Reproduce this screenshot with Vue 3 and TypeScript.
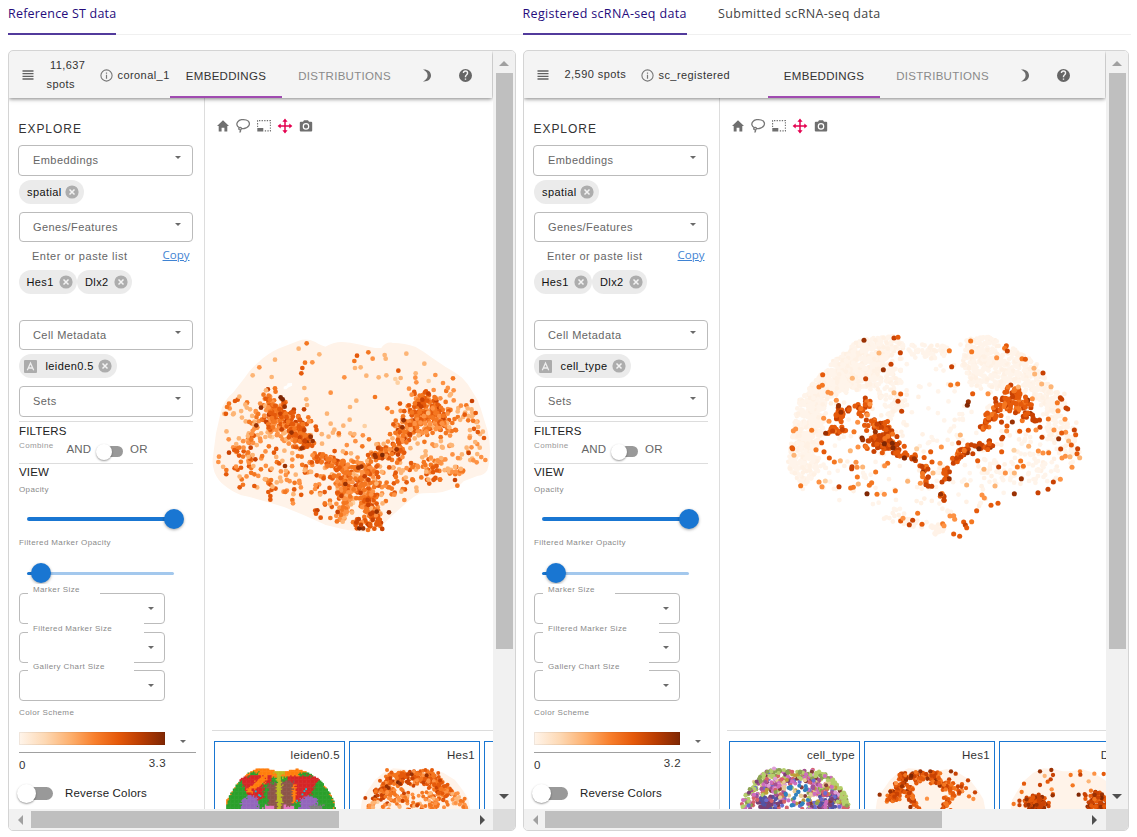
<script setup lang="ts">
interface Dot { x: number; y: number; c: string }
interface Card { title: string; kind: 'cells' | 'dots'; dots: Dot[]; r: number; outline: boolean }
interface Panel {
  id: string
  spots: string
  name: string
  meta: string
  max: string
  plot: Dot[]
  base: Dot[]
  cards: Card[]
}
type Pt = [number, number]

const ORANGES = ['#fff3e8', '#fdd0a2', '#fdb576', '#fd9244', '#f47721', '#e55a0b', '#c94203', '#9a3103', '#7f2704']

function rng(seed: number): () => number {
  let s = seed
  return () => {
    s = (s * 1664525 + 1013904223) % 4294967296
    return s / 4294967296
  }
}
const poly = (s: string): Pt[] => s.split(' ').map((p) => p.split(',').map(Number) as Pt)
const explicit = (s: string): Dot[] =>
  s.trim().split(/\s+/).map((p) => {
    const [x, y, c] = p.split(',').map(Number)
    return { x, y, c: ORANGES[c] }
  })

function inside(x: number, y: number, pts: Pt[]): boolean {
  let hit = false
  for (let i = 0, j = pts.length - 1; i < pts.length; j = i++) {
    const [xi, yi] = pts[i]
    const [xj, yj] = pts[j]
    if (yi > y !== yj > y && x < ((xj - xi) * (y - yi)) / (yj - yi) + xi) hit = !hit
  }
  return hit
}
const shade = (t: number): string => ORANGES[Math.max(1, Math.min(8, Math.round(t)))]

/* Dots scattered around a line segment. */
function band(r: () => number, a: Pt, b: Pt, w: number, n: number, mean: number, spread = 2.1): Dot[] {
  const out: Dot[] = []
  for (let i = 0; i < n; i++) {
    const t = r()
    const g = () => (r() + r() + r() - 1.5) * 1.35 * w
    out.push({ x: a[0] + (b[0] - a[0]) * t + g(), y: a[1] + (b[1] - a[1]) * t + g(), c: shade(mean + (r() + r() - 1) * spread) })
  }
  return out
}
/* Dots spread evenly over a polygon. */
function fill(r: () => number, area: Pt[], n: number, pick: () => string): Dot[] {
  const xs = area.map((p) => p[0])
  const ys = area.map((p) => p[1])
  const x0 = Math.min(...xs), x1 = Math.max(...xs), y0 = Math.min(...ys), y1 = Math.max(...ys)
  const out: Dot[] = []
  let guard = 0
  while (out.length < n && guard++ < n * 20) {
    const x = x0 + r() * (x1 - x0)
    const y = y0 + r() * (y1 - y0)
    if (inside(x, y, area)) out.push({ x, y, c: pick() })
  }
  return out
}

const OUTLINE_A = 'M282,34 Q305,26 330,38 Q348,50 362,52 Q385,38 410,38 Q430,38 470,47 Q505,58 530,56 Q540,38 562,40 Q600,42 630,52 Q655,66 680,85 L720,112 Q755,132 770,145 Q790,165 800,185 Q818,210 825,235 L845,300 Q853,330 853,360 Q852,400 845,420 Q835,434 820,435 L775,452 Q760,470 740,475 Q715,485 690,487 Q655,486 640,490 Q620,500 600,520 L560,555 L530,585 Q518,600 505,602 L470,603 Q430,600 400,592 L360,582 L300,555 L240,530 L190,515 Q150,502 110,494 Q80,482 60,465 Q40,450 30,425 Q22,400 26,380 L35,310 L52,235 Q66,205 85,190 L120,145 Q140,115 165,95 Q190,72 220,58 Z'

function plotA(): Dot[] {
  const r = rng(41)
  const light = () => shade(1.7 + r() * r() * 4)
  const mid = () => shade(1.6 + r() * 3.8)
  return [
    ...fill(r, poly('90,330 160,310 250,360 330,400 420,440 420,570 380,575 330,550 310,510 215,490 110,465 95,440'), 135, mid),
    ...fill(r, poly('500,420 620,370 720,390 780,425 740,450 640,470 560,500 530,570 490,590'), 105, mid),
    ...fill(r, poly('600,350 700,320 830,330 835,395 760,440 680,420 610,400'), 45, light),
    ...fill(r, poly('720,170 780,190 815,260 840,320 770,330 740,260'), 32, light),
    ...fill(r, poly('55,205 100,200 160,240 140,330 70,370 50,300'), 24, light),
    ...fill(r, poly('40,370 110,330 130,400 110,470 60,430'), 10, mid),
    ...fill(r, poly('320,300 500,315 560,330 560,370 400,375 330,350'), 28, light),
    ...band(r, [205, 295], [255, 330], 22, 40, 2.5),
    ...band(r, [180, 230], [230, 255], 31, 90, 3.9),
    ...band(r, [215, 260], [310, 310], 27, 130, 4.4),
    ...band(r, [285, 320], [300, 345], 18, 30, 5),
    ...band(r, [160, 270], [130, 340], 12, 20, 3.4),
    ...band(r, [320, 375], [415, 410], 13, 48, 4.2),
    ...band(r, [415, 408], [500, 415], 18, 55, 3.5),
    ...band(r, [500, 395], [590, 350], 18, 58, 4.5),
    ...band(r, [585, 325], [640, 230], 27, 110, 4.1),
    ...band(r, [650, 215], [700, 245], 30, 95, 4.3),
    ...band(r, [640, 290], [740, 285], 28, 90, 3.7),
    ...band(r, [415, 420], [420, 490], 20, 72, 3.7),
    ...band(r, [435, 490], [410, 565], 18, 50, 3.1),
    ...band(r, [480, 430], [480, 500], 25, 78, 3.7),
    ...band(r, [485, 495], [500, 565], 15, 60, 4.3),
    ...band(r, [455, 575], [530, 580], 14, 30, 4.7),
    ...explicit(`305,40,4 281,56,2 343,73,2 210,89,2 163,112,3 143,136,2 200,141,2 300,98,4 322,97,3 292,114,5 289,130,5
      456,77,5 448,93,4 490,67,4 503,86,3 539,75,2 542,86,2 604,71,2 658,101,2 450,114,2 467,112,2 484,137,2 418,142,3
      521,142,2 544,136,2 580,122,5 571,147,1 578,158,1 587,144,2 632,130,2 631,143,3 634,157,3 691,135,3 744,145,4 714,159,3
      671,153,1 612,176,3 620,194,3 660,187,5 670,191,6 686,180,3 706,205,3 298,174,2 377,188,3 304,208,2 306,225,2 183,181,2
      210,175,4 227,202,8 233,208,8 239,230,7 168,233,7 510,201,4 454,212,2 435,231,2 547,235,4 561,246,3 366,251,2 434,269,2
      479,288,1 415,287,2 377,281,2 388,299,2 90,213,5 98,209,5 72,221,4 66,231,4 103,200,2 121,224,2 135,238,2 154,286,7
      137,353,6 72,368,6 42,380,3 40,396,3 64,420,4 151,388,6 240,408,7 104,472,5 148,468,5 190,486,5 196,498,5 196,509,5
      262,510,4 264,520,3 317,320,7 323,333,7 299,332,6 290,355,7 337,541,6 333,551,5 347,563,5 376,564,4 398,546,6 421,462,7
      409,498,6 463,595,8 489,600,4 508,596,5 515,545,7 552,547,7 509,375,7 512,381,7 532,375,8 575,358,7 596,271,7 592,292,7
      615,313,6 652,209,6 801,213,6 812,249,5 779,254,5 837,324,5 841,390,3 791,369,6 750,450,6 757,467,4 460,413,7 469,410,7
      479,439,6 488,510,6 490,525,6 496,552,6 454,577,6 468,585,6 598,510,3 568,494,3 635,483,2 634,473,2 805,391,3 815,397,3`),
  ]
}

const OUT_B = poly('235,45 330,28 400,45 470,60 560,40 620,32 690,55 760,105 820,165 870,225 895,310 900,380 870,430 835,465 800,480 720,490 650,520 590,560 550,600 490,620 430,600 330,580 240,545 130,510 60,490 22,430 30,330 60,220 120,150 170,90')
function baseB(): Dot[] {
  const r = rng(77)
  const pale = () => (r() < 0.25 ? '#fff1e4' : '#fff4ea')
  return [
    ...fill(r, OUT_B, 330, pale),
    ...fill(r, poly('235,45 340,30 380,60 300,130 230,180 130,230 140,300 110,370 125,430 70,485 25,430 35,320 60,220 130,140'), 820, pale),
    ...fill(r, poly('170,100 300,90 290,190 150,210 110,300 80,290 90,210'), 260, pale),
    ...fill(r, poly('560,45 620,32 700,70 770,115 810,180 860,240 820,290 760,210 700,170 650,190 570,180 545,120'), 470, pale),
    ...fill(r, poly('270,130 360,100 370,240 330,290 300,220'), 100, pale),
    ...fill(r, poly('370,60 520,60 500,105 400,100'), 40, pale),
    ...fill(r, poly('570,400 770,380 860,430 770,475 620,480'), 65, pale),
    ...fill(r, poly('790,210 890,310 895,380 850,400 800,340'), 60, pale),
    ...band(r, [470, 608], [480, 615], 12, 18, 1).map((d) => ({ ...d, c: '#fff2e7' })),
    ...band(r, [320, 570], [420, 600], 12, 24, 1).map((d) => ({ ...d, c: '#fff2e7' })),
  ]
}
function plotB(): Dot[] {
  const r = rng(9)
  return [
    ...band(r, [172, 275], [215, 250], 14, 24, 5.4, 1.6),
    ...band(r, [235, 243], [272, 240], 15, 20, 5.2, 1.6),
    ...band(r, [135, 325], [200, 308], 9, 17, 5.1, 1.6),
    ...band(r, [262, 292], [312, 296], 16, 26, 5.3, 1.6),
    ...band(r, [262, 352], [355, 368], 17, 54, 5.5, 1.8),
    ...band(r, [305, 315], [335, 350], 18, 32, 5.3, 1.7),
    ...band(r, [350, 392], [425, 408], 14, 16, 5.3, 1.6),
    ...band(r, [433, 420], [443, 485], 8, 20, 5.5, 1.5),
    ...band(r, [500, 435], [500, 450], 10, 11, 5.2, 1.5),
    ...band(r, [515, 413], [550, 378], 10, 18, 5.3, 1.5),
    ...band(r, [555, 380], [635, 355], 11, 30, 5.5, 1.8),
    ...band(r, [606, 315], [642, 268], 13, 28, 5.1, 1.6),
    ...band(r, [645, 262], [700, 225], 19, 36, 5.2, 1.6),
    ...band(r, [705, 212], [740, 260], 20, 38, 5.3, 1.8),
    ...band(r, [740, 265], [775, 295], 9, 12, 5.7, 1.6),
    ...band(r, [688, 190], [710, 208], 11, 10, 4.9, 1.6),
    ...band(r, [483, 510], [496, 530], 5, 8, 5.5, 1.6),
    ...explicit(`252,46,7 342,39,6 354,37,5 297,84,2 361,83,6 333,118,6 310,134,7 257,161,6 217,160,2 128,149,5 117,186,4 127,181,4
      144,202,3 153,205,3 169,226,3 342,203,2 362,207,5 354,229,6 365,259,6 508,77,4 572,48,4 575,80,4 515,125,6 512,180,4 533,177,4
      578,206,5 565,230,7 562,241,8 624,206,3 679,62,5 674,70,4 682,78,6 650,98,3 726,101,4 736,103,5 762,130,2 764,147,2 789,144,6
      785,177,2 813,185,2 684,186,4 715,186,2 757,221,3 841,218,6 845,223,6 832,233,4 834,257,3 858,249,6 863,252,6 855,283,3
      805,282,4 883,315,6 887,329,5 857,322,3 845,324,5 836,341,7 866,348,2 874,360,5 893,371,6 891,386,5 842,372,6 846,399,3
      856,394,3 870,395,2 899,398,2 876,427,3 841,463,3 820,471,6 804,493,6 774,503,6 703,506,7 724,461,7 786,337,6 768,315,3
      745,316,5 719,319,5 681,303,5 697,291,7 680,318,3 668,337,6 665,341,6 665,380,5 702,376,1 746,364,2 775,378,3 789,384,3
      806,383,4 822,315,3 131,280,3 147,289,3 95,316,4 47,312,3 40,317,3 38,371,5 42,391,2 36,368,5 125,353,5 108,374,4 132,380,5
      148,399,5 163,411,4 181,407,2 216,425,6 215,431,6 228,412,3 248,426,2 231,427,3 287,441,4 323,415,4 314,422,3 232,456,4
      275,473,4 268,481,4 235,477,2 136,468,1 117,471,3 126,485,3 62,482,4 177,485,6 212,489,4 220,487,4 261,506,8 291,508,4
      313,508,3 346,497,4 383,469,2 211,377,2 234,366,3 410,371,1 484,366,3 452,380,5 456,411,5 480,415,3 459,444,2 421,475,3
      536,353,6 541,330,2 560,480,2 612,433,2 593,407,5 656,426,6 676,444,3 703,444,2 645,483,2 712,426,4 722,408,4 730,424,4
      606,510,3 613,519,3 633,541,5 654,535,5 590,557,5 575,590,4 413,565,4 362,588,5 369,580,3 398,586,6 388,599,6 426,598,5
      488,596,4 492,602,3 510,573,3 521,572,3 524,583,3 551,591,5 556,600,6 560,608,5 521,627,5 539,634,5 373,399,8 403,401,7
      246,339,8 248,344,7 286,320,7 313,356,8 337,355,8 339,368,8 597,371,8 486,471,6 222,320,4 258,365,4 270,238,3 262,270,3
      244,273,5 233,292,3 482,508,7 137,325,7 183,262,7`),
  ]
}

/* Gallery thumbnails. */
const MINI = poly('32,202 36,174 52,147 75,114 100,92 130,79 160,81 188,88 215,88 245,81 280,92 315,114 340,147 355,172 361,202')

function clusterCells(): Dot[] {
  const r = rng(5)
  const out: Dot[] = []
  for (let gy = 78; gy < 204; gy += 4) {
    for (let gx = 28; gx < 366; gx += 4) {
      if (!inside(gx, gy, MINI)) continue
      const x = gx + (r() - 0.5) * 9
      const y = gy + (r() - 0.5) * 9
      const d = Math.abs(x - 193)
      let c = '#2ca02c'
      if (((x - 196) / 150) ** 2 + ((y - 215) / 132) ** 2 > 1.2) c = '#ff7f0e'
      if (y < 93 + (d < 60 ? 13 : 0)) c = '#ff7f0e'
      if (d > 25 && d < 125 && y > 102 && y < 176 && d + (y - 100) * 0.5 < 124) c = '#d62728'
      if (d > 26 && d < 48 && y > 125) c = '#2ca02c'
      if (x > 98 && x < 155 && Math.abs(y - (148 - (x - 98) * 0.7)) < 9) c = '#ff7f0e'
      if (Math.abs(x - 234) < 9 && y > 130 && y < 180) c = '#ff7f0e'
      if (d > 62 && d < 114 && y > 160 + Math.abs(d - 86) * 0.5) c = '#9467bd'
      if ((Math.abs(x - 174) < 15 && y > 126) || (Math.abs(x - 217) < 16 && y > 118)) c = '#8c564b'
      if (Math.abs(x - 193) < (y > 100 ? 8 : 14)) c = '#bcbd22'
      if (y > 192 && d > 15 && d < 45) c = '#e377c2'
      if (y > 190 && Math.abs(x - 305) < 20) c = '#7f7f7f'
      out.push({ x: gx, y: gy, c })
    }
  }
  for (const [x, y] of [[132, 159], [136, 162], [246, 176], [262, 157], [268, 147], [273, 141], [122, 148]] as Pt[])
    out.push({ x, y, c: '#17becf' })
  return out
}
function typeDots(): Dot[] {
  const r = rng(13)
  const inner = ['#ce6dbd', '#ce6dbd', '#de9ed6', '#7b4173', '#a55194', '#6b6ecf', '#d6616b', '#d6616b', '#e7cb94', '#843c39', '#b5cf6b', '#8ca252', '#bd9e39']
  const out = fill(r, MINI, 780, () => '')
  for (const p of out) {
    const edge = ((p.x - 196) / 150) ** 2 + ((p.y - 215) / 125) ** 2
    if (edge > 0.95 && r() < 0.65) p.c = r() < 0.7 ? '#b5cf6b' : '#8ca252'
    else if (p.y > 160 && (Math.abs(p.x - 110) < 32 || Math.abs(p.x - 290) < 32) && r() < 0.6) p.c = r() < 0.6 ? '#5254a3' : '#7b4173'
    else p.c = inner[Math.floor(r() * inner.length)]
  }
  const kept = out.filter((p) => !(Math.abs(p.x - 200) < 34 && p.y > 120 && r() < 0.88))
  return [...kept, ...fill(r, poly('168,130 232,125 240,200 160,200'), 18, () => '#3182bd')]
}
function hesDots(): Dot[] {
  const r = rng(21)
  return [
    ...band(r, [80, 177], [130, 112], 17, 80, 4.9),
    ...band(r, [120, 102], [260, 107], 17, 145, 4.7),
    ...band(r, [250, 112], [290, 167], 18, 80, 4.2),
    ...band(r, [120, 152], [200, 190], 22, 60, 3.6),
    ...band(r, [230, 162], [260, 200], 20, 50, 3.5),
    ...band(r, [55, 192], [100, 197], 12, 20, 2.6),
    ...band(r, [300, 162], [345, 197], 14, 24, 2.8),
    ...explicit('46,168,6 110,133,7 116,138,7 144,121,8 150,125,7 185,97,7 162,154,6 303,145,5 344,170,4 230,100,7 158,176,6'),
  ].filter((d) => d.y > 82)
}
function hesSparse(): Dot[] {
  const r = rng(33)
  return [
    ...band(r, [78, 175], [115, 112], 14, 75, 5.3),
    ...band(r, [110, 105], [225, 107], 12, 76, 5.4),
    ...band(r, [225, 120], [280, 150], 16, 48, 5.1),
    ...band(r, [125, 130], [150, 200], 10, 34, 5.3),
    ...band(r, [240, 165], [245, 200], 10, 15, 4.9),
    ...explicit('44,158,7 166,88,7 196,88,7 258,88,7 272,95,6 309,115,6 330,151,6 312,163,4 325,171,3 186,170,3 262,170,4 139,101,8'),
  ].filter((d) => d.y > 84)
}
function dlxSparse(): Dot[] {
  const r = rng(55)
  return [
    ...band(r, [75, 185], [140, 177], 15, 70, 5.8),
    ...band(r, [95, 172], [130, 198], 12, 40, 6),
    ...band(r, [275, 167], [310, 167], 15, 60, 5.9),
    ...band(r, [265, 195], [320, 195], 12, 30, 5.6),
    ...explicit('120,88,7 154,84,7 134,102,2 159,99,6 152,112,6 143,119,5 120,129,6 72,125,5 155,142,3 158,160,7 212,99,4 218,130,4 240,88,4 241,98,6 283,95,3 266,118,2 311,96,5 236,158,8 41,186,4 65,150,4'),
  ]
}

const panels: Panel[] = [
  {
    id: 'st', spots: ' 11,637\nspots', name: 'coronal_1', meta: 'leiden0.5', max: '3.3',
    base: [], plot: plotA(),
    cards: [
      { title: 'leiden0.5', kind: 'cells', dots: clusterCells(), r: 0, outline: false },
      { title: 'Hes1', kind: 'dots', dots: hesDots(), r: 6, outline: true },
      { title: '', kind: 'dots', dots: [], r: 0, outline: false },
    ],
  },
  {
    id: 'sc', spots: '2,590 spots', name: 'sc_registered', meta: 'cell_type', max: '3.2',
    base: baseB(), plot: plotB(),
    cards: [
      { title: 'cell_type', kind: 'dots', dots: typeDots(), r: 6.2, outline: false },
      { title: 'Hes1', kind: 'dots', dots: hesSparse(), r: 6.5, outline: true },
      { title: 'Dlx2', kind: 'dots', dots: dlxSparse(), r: 6.5, outline: true },
    ],
  },
]
const miniPoints = MINI.map((p) => p.join(',')).join(' ')
const sizeFields = [
  { id: 'marker', label: 'Marker Size' },
  { id: 'filtered', label: 'Filtered Marker Size' },
  { id: 'gallery', label: 'Gallery Chart Size' },
]
</script>

<template>
  <div class="page">
    <nav class="tabs">
      <div class="tab-group first"><span class="tab on">Reference ST data</span></div>
      <div class="tab-group"><span class="tab on reg">Registered scRNA-seq data</span><span class="tab sub">Submitted scRNA-seq data</span></div>
    </nav>

    <main class="panels">
      <section v-for="p in panels" :key="p.id" class="panel" :class="p.id">
        <div class="view">
          <header class="bar">
            <div class="info">
              <svg class="menu" viewBox="0 0 12 10"><path d="M0.500 1h11M0.500 3.700h11M0.500 6.300h11M0.500 9h11" stroke="#606060" stroke-width="1.300" /></svg>
              <span class="spots">{{ p.spots }}</span>
              <svg class="inf" viewBox="0 0 13 13"><circle cx="6.500" cy="6.500" r="5.600" fill="none" stroke="#777" stroke-width="1.100" /><path d="M6.500 5.700v4M6.500 3.400v1.300" stroke="#777" stroke-width="1.200" /></svg>
              <span class="name">{{ p.name }}</span>
            </div>
            <span class="mode on">EMBEDDINGS</span>
            <span class="mode dist">DISTRIBUTIONS</span>
            <svg class="moon" viewBox="0 0 8 13"><path d="M0 .6C5 .2 8 3 8 6.500S5 12.800 0 12.400C3 11 4.600 9 4.600 6.500S3 2 0 .6Z" fill="#6a6a6a" /></svg>
            <svg class="help" viewBox="0 0 24 24"><path fill="#666" d="M12 0a12 12 0 1 0 0 24 12 12 0 0 0 0-24Zm1.300 20h-2.600v-2.600h2.600Zm2.700-9.600-1.200 1.200c-1 1-1.500 1.700-1.500 3.500h-2.600v-.6c0-1.400.5-2.500 1.500-3.500l1.500-1.600c.5-.4.8-1 .8-1.800a2.500 2.500 0 0 0-5 0H6.900a5.100 5.100 0 0 1 10.200 0c0 1.100-.4 2.100-1.100 2.800Z" /></svg>
          </header>

          <div class="body">
            <aside class="side">
              <h2 class="explore">EXPLORE</h2>
              <div class="select s1">Embeddings<i class="caret" /></div>
              <div class="chips"><span class="chip c-sp">spatial<svg class="x" viewBox="0 0 14 14"><circle cx="7" cy="7" r="6.600" /><path d="M4.500 4.500l5 5M9.500 4.500l-5 5" /></svg></span></div>
              <div class="select s2">Genes/Features<i class="caret" /></div>
              <div class="paste"><span>Enter or paste list</span><a>Copy</a></div>
              <div class="chips"><span v-for="g in ['Hes1', 'Dlx2']" :key="g" class="chip" :class="g">{{ g }}<svg class="x" viewBox="0 0 14 14"><circle cx="7" cy="7" r="6.600" /><path d="M4.500 4.500l5 5M9.500 4.500l-5 5" /></svg></span></div>
              <div class="select s3">Cell Metadata<i class="caret" /></div>
              <div class="chips">
                <span class="chip c-meta"><svg class="letter" viewBox="0 0 13 13"><rect width="13" height="13" rx="1" fill="#acacac" /><path d="M3.300 10.200L6.500 3l3.200 7.200M4.500 8h4" fill="none" stroke="#eee" stroke-width="1.300" /></svg>{{ p.meta }}<svg class="x" viewBox="0 0 14 14"><circle cx="7" cy="7" r="6.600" /><path d="M4.500 4.500l5 5M9.500 4.500l-5 5" /></svg></span>
              </div>
              <div class="select s4">Sets<i class="caret" /></div>
              <hr class="rule">
              <h3 class="head f">FILTERS</h3>
              <div class="combine">
                <small>Combine</small><span class="and">AND</span><span class="toggle"><b /></span><span>OR</span>
              </div>
              <hr class="rule tight">
              <h3 class="head">VIEW</h3>
              <small class="cap op">Opacity</small>
              <div class="slider full"><b /></div>
              <small class="cap fmo">Filtered Marker Opacity</small>
              <div class="slider low"><b /></div>
              <div v-for="f in sizeFields" :key="f.id" class="field" :class="f.id"><small>{{ f.label }}</small><i class="caret" /></div>
              <small class="cap cs">Color Scheme</small>
              <div class="scheme"><span class="ramp" /><i class="caret" /></div>
              <div class="scale"><span>0</span><span class="max">{{ p.max }}</span></div>
              <div class="reverse"><span class="toggle big"><b /></span>Reverse Colors</div>
            </aside>

            <div class="main">
              <div class="tools">
                <svg viewBox="0 0 14 14"><path d="M7 1.200L13 7h-1.700v5.500H8.400V8.700H5.600v3.800H2.700V7H1Z" fill="#6f6f6f" /></svg>
                <svg viewBox="0 0 14 14"><path d="M3.200 8.600C.6 7.300.2 4.800 1.700 2.800 3.400.7 7.300 0 10.200 1c2.900 1 4 3.500 2.700 5.600C11.600 8.900 8 9.900 5.200 9.400M4.900 8.500c.9.900.5 2.100-.6 2.300s-2-.8-1.300-1.700 1.300-.9 1.900-.6ZM4.700 10.700c.1 1.200-.3 2-1.100 2.800" fill="none" stroke="#777" stroke-width="1.300" /></svg>
                <svg viewBox="0 0 14 14"><path d="M.6 8V1.600h12.800v10.300H7" fill="none" stroke="#6f6f6f" stroke-width="1.100" stroke-dasharray="1.300 1.300" /><path d="M.3 9h6v3.500h-6z" fill="#6f6f6f" /></svg>
                <svg viewBox="0 0 14 14"><path d="M7 1.500v11M1.500 7h11" stroke="#e4004f" stroke-width="1.500" /><path d="M7-.4L9.600 2.700H4.400ZM7 14.400L4.400 11.300h5.200ZM-.4 7l3.100-2.600v5.200ZM14.400 7l-3.100 2.600V4.400Z" fill="#e4004f" /></svg>
                <svg viewBox="0 0 14 14"><path d="M5 1.300h4l1 1.400h2.200a1 1 0 0 1 1 1v7.800a1 1 0 0 1-1 1H1.800a1 1 0 0 1-1-1V3.700a1 1 0 0 1 1-1H4Z" fill="#6f6f6f" /><circle cx="7" cy="7.400" r="2.700" fill="none" stroke="#fff" stroke-width="1.200" /></svg>
              </div>

              <svg v-if="p.id === 'st'" class="plot" viewBox="0 0 900 645">
                <path :d="OUTLINE_A" fill="#fff3e9" stroke="#fff3e9" stroke-width="4" stroke-linejoin="round" />
                <path d="M236,178 L236,170 L246,166 L248,160 L261,159 L261,167 L251,172 L244,178Z" fill="#fff" />
                <circle v-for="(d, i) in p.plot" :key="i" :cx="d.x" :cy="d.y" r="7.100" :fill="d.c" />
              </svg>
              <svg v-else class="plot" viewBox="0 0 960 675">
                <circle v-for="(d, i) in p.base" :key="'b' + i" :cx="d.x" :cy="d.y" r="7.100" :fill="d.c" />
                <circle v-for="(d, i) in p.plot" :key="i" :cx="d.x" :cy="d.y" r="7.600" :fill="d.c" />
              </svg>

              <div class="gallery">
                <article v-for="(c, k) in p.cards" :key="k" class="card">
                  <h4>{{ c.title }}</h4>
                  <svg class="thumb" viewBox="0 0 390 201">
                    <polygon v-if="c.outline" :points="miniPoints" fill="#fff3e9" />
                    <template v-if="c.kind === 'cells'">
                      <rect v-for="(d, i) in c.dots" :key="i" :x="d.x - 2.500" :y="d.y - 2.500" width="5.500" height="5.500" :fill="d.c" />
                    </template>
                    <template v-else>
                      <circle v-for="(d, i) in c.dots" :key="i" :cx="d.x" :cy="d.y" :r="c.r" :fill="d.c" />
                    </template>
                  </svg>
                </article>
              </div>
            </div>
          </div>
        </div>

        <div class="vbar">
          <svg class="arr" viewBox="0 0 10 5"><path d="M0 5L5 0l5 5Z" fill="#a0a0a0" /></svg>
          <span class="vthumb" />
          <svg class="arr down" viewBox="0 0 10 5"><path d="M0 0L5 5l5-5Z" fill="#505050" /></svg>
        </div>
        <div class="hbar">
          <svg class="harr" viewBox="0 0 5 10"><path d="M5 0L0 5l5 5Z" fill="#a0a0a0" /></svg>
          <span class="hthumb" />
          <svg class="harr right" viewBox="0 0 5 10"><path d="M0 0L5 5l-5 5Z" fill="#505050" /></svg>
        </div>
        <div class="corner" />
      </section>
    </main>
  </div>
</template>

<style>
html, body { background: #fff; overflow: hidden; }
</style>

<style scoped>
* { box-sizing: border-box; }
.page { width: 1137px; height: 837px; overflow: hidden; font-family: "Liberation Sans", Arial, sans-serif; font-size: 11px; letter-spacing: .4px; color: #333; }
h2, h3, h4, hr { margin: 0; border: 0; font-weight: normal; }
small { font-size: 8px; letter-spacing: .38px; color: #8a8a8a; }
svg { display: block; flex: none; }

.tabs { display: flex; height: 35px; margin: 0 6px 0 8px; border-bottom: 1px solid #f0f0f0; font-family: "Open Sans", "Noto Sans", sans-serif; font-size: 12.500px; letter-spacing: .33px; }
.tab-group { display: flex; height: 35px; }
.tab-group.first { width: 514.500px; letter-spacing: .2px; }
.tab { height: 35px; line-height: 27px; white-space: nowrap; color: #444; }
.tab.on { color: #260c7c; border-bottom: 2px solid #523a9c; width: 108px; }
.tab.reg { width: 164.500px; margin-right: 31px; }

.panels { display: flex; gap: 7px; margin: 15px 0 0 8px; }
.panel { display: grid; grid-template-rows: 758px 21px; height: 781px; border: 1px solid #d4d4d4; border-radius: 5px; overflow: hidden; }
.st { grid-template-columns: 484px 22px; width: 508px; }
.sc { grid-template-columns: 582px 22px; width: 606px; }
.view { overflow: hidden; }
.bar { position: relative; display: flex; align-items: center; height: 47px; margin-right: 1px; background: #f4f4f4; box-shadow: 0 1px 4px rgba(0, 0, 0, .5); }
.info { display: flex; align-items: center; flex: none; padding-left: 13px; color: #333; }
.st .info { width: 161px; }
.sc .info { width: 244px; }
.menu { width: 12px; height: 10px; margin-top: 1px; }
.spots { white-space: pre; line-height: 19px; margin-left: 12.500px; width: 53px; }
.sc .spots { width: 76px; margin-left: 15.500px; letter-spacing: .45px; }
.inf { width: 13px; height: 13px; margin-top: 1px; }
.name { margin-left: 5px; letter-spacing: .43px; }
.mode { flex: none; width: 112px; height: 47px; line-height: 50px; text-align: center; font-size: 11.500px; letter-spacing: .3px; color: #333; }
.mode.on { border-bottom: 2px solid #a04bb0; }
.mode.dist { width: 125px; color: #8a8a8a; }
.moon { width: 8px; height: 13px; margin-left: 16px; margin-top: 1px; }
.help { width: 13px; height: 13px; margin-left: 27.500px; margin-top: 1px; }

.body { display: flex; height: 711px; }
.side { flex: none; width: 196px; height: 711px; padding-left: 10px; border-right: 1px solid #ddd; display: flex; flex-direction: column; align-items: flex-start; overflow: hidden; }
.side > * { flex: none; }
.explore { margin: 22px 0 0 -.5px; height: 16px; line-height: 18px; font-size: 12px; letter-spacing: .95px; }
.select { display: flex; align-items: center; justify-content: space-between; width: 174px; height: 30px; padding: 0 11.500px 1px 13px; border: 1px solid #bbb; border-radius: 4px; color: #666; letter-spacing: .43px; }
.caret { width: 0; height: 0; border: 3px solid transparent; border-top: 3px solid #6a6a6a; border-bottom: 0; }
.select .caret { margin-top: -5px; }
.s1 { margin-top: 9px; height: 31px; width: 175px; margin-left: -1px; padding-left: 14px; padding-bottom: 2px; }
.s2, .s4 { margin-top: 8px; }
.s4 { height: 31px; padding-bottom: 2px; }
.s3 { margin-top: 26px; padding-bottom: 0; }
.s3 .caret { margin-top: -6px; }
.chips { display: flex; margin-top: 4px; height: 24px; }
.chip { display: flex; align-items: center; justify-content: space-between; height: 24px; padding: 0 5px 0 8px; line-height: 22px; border-radius: 12px; background: #ebebeb; color: #111; }
.c-sp { width: 65px; line-height: 23px; }
.Hes1 { width: 58px; padding-left: 7.500px; padding-right: 4.500px; }
.Dlx2 { width: 55px; padding-right: 4px; }
.c-meta { min-width: 98px; gap: 4.500px; padding-left: 5px; }
.sc .c-meta { width: 97px; min-width: 0; }
.letter { width: 13px; height: 13px; margin-right: 4px; }
.x { width: 14px; height: 14px; fill: #adadad; stroke: #f3f3f3; stroke-width: 1.500; }
.x circle { stroke: none; }
.paste { display: flex; justify-content: space-between; align-items: center; width: 170.500px; height: 20px; margin-top: 4px; padding: 0 0 1px 13px; color: #666; letter-spacing: .52px; }
.paste a { margin-top: -2px; color: #3f83d3; text-decoration: underline; text-underline-offset: 1px; font: 11.500px "Open Sans", sans-serif; letter-spacing: 0; }
.rule { width: 174px; height: 1px; margin-top: 4px; background: #ddd; }
.rule.tight { margin-top: 0; }
.head { height: 16px; line-height: 16px; font-size: 11.500px; letter-spacing: .15px; color: #222; }
.head.f { margin-top: 1px; }
.combine { display: flex; height: 24px; font-size: 11.500px; letter-spacing: .1px; line-height: 20px; color: #666; }
.combine small { line-height: 13px; width: 47.500px; color: #999; }
.toggle { position: relative; width: 22px; height: 11px; margin: 7px 7px 0 10px; border-radius: 6px; background: #999; }
.toggle b { position: absolute; left: -5px; top: -2px; width: 16px; height: 16px; border-radius: 50%; background: #fff; box-shadow: 0 1px 2px rgba(0, 0, 0, .4); }
.cap { height: 12px; line-height: 13px; }
.op { margin-top: 3px; }
.fmo { margin-top: 7px; }
.cs { margin-top: 5px; }
.slider { display: flex; align-items: center; width: 147px; height: 20px; margin: 14px 0 0 7.500px; }
.slider::before { content: ""; flex: none; height: 4px; width: 147px; border-radius: 2px; background: #1976d2; }
.low { margin-top: 15px; }
.low::before { height: 3px; background: linear-gradient(90deg, #1976d2 10%, #a3c8ed 10%); }
.slider b { flex: none; width: 20px; height: 20px; margin-left: -10px; border-radius: 50%; background: #1976d2; box-shadow: 0 1px 3px rgba(0, 0, 0, .35); }
.low b { margin-left: -142.500px; }
.field { position: relative; display: flex; align-items: center; justify-content: flex-end; width: 146px; height: 31px; padding-right: 10px; border: 1px solid #bbb; border-radius: 4px; margin-top: 7px; }
.field small { position: absolute; top: -10px; left: 8px; height: 12px; line-height: 12px; padding-left: 5px; background: #fff; }
.marker { margin-top: 10px; }
.marker small { width: 72px; }
.filtered { margin-top: 8px; }
.filtered small { width: 116px; }
.field.gallery small { width: 106px; }
.scheme { display: flex; align-items: center; width: 177px; height: 21px; margin-top: 14px; padding-right: 10px; justify-content: space-between; border-bottom: 1px solid #a0a0a0; }
.ramp { width: 146px; height: 13px; margin-top: -7px; background: linear-gradient(90deg, #fff5eb, #fdd8b3 18%, #fdae6b 36%, #f87f2c 52%, #e5590a 68%, #b83c02 84%, #7f2704); box-shadow: inset 0 0 0 1px rgba(0, 0, 0, .06); }
.scheme .caret { margin-top: -2px; }
.scale { display: flex; justify-content: space-between; width: 147px; height: 20px; margin-top: 2px; line-height: 20px; font-size: 11.500px; }
.scale .max { line-height: 16px; }
.reverse { display: flex; align-items: center; height: 20px; margin-top: 8px; font-size: 11.500px; letter-spacing: .2px; color: #222; }
.big { width: 34px; height: 13px; margin: 0 12px 0 0; border-radius: 7px; }
.big b { left: -2px; top: -3px; width: 19px; height: 19px; }

.main { flex: 1; min-width: 0; display: flex; flex-direction: column; }
.tools { display: flex; gap: 6.800px; height: 14px; margin: 21px 0 0 10.500px; }
.tools svg { width: 14px; height: 14px; overflow: visible; }
.plot { width: 300px; height: 215px; margin: 197px 0 0 0; }
.sc .plot { width: 320px; height: 225px; margin: 192px 0 0 60px; }
.main .gallery { display: flex; gap: 4px; flex: none; margin: 185px 0 0 7px; padding: 10px 0 0 2px; border-top: 1px solid #dcdcdc; height: 80px; overflow: hidden; }
.sc .main .gallery { margin-top: 180px; }
.card { position: relative; flex: none; width: 131px; height: 131px; border: 1px solid #1976d2; background: #fff; }
.card h4 { position: absolute; right: 4px; top: 5px; line-height: 16px; font-size: 11.500px; letter-spacing: .3px; color: #333; }
.thumb { width: 130px; height: 67px; }

.vbar { display: flex; flex-direction: column; align-items: center; background: #f1f1f1; padding-top: 10px; }
.arr { width: 10px; height: 5px; }
.vthumb { width: 17px; height: 576px; margin: 7px 0 145px; background: #bfbfbf; }
.hbar { display: flex; align-items: center; background: #f1f1f1; padding-left: 9px; }
.harr { width: 5px; height: 10px; }
.hthumb { width: 308px; height: 17px; margin: 0 141px 0 8px; background: #bfbfbf; }
.sc .hthumb { width: 397px; margin: 0 150px 0 7px; }
.corner { background: #dcdcdc; }
</style>
